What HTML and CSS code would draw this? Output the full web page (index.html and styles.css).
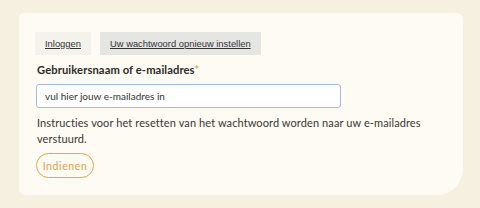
FILE: index.html
```html
<!DOCTYPE html>
<html lang="nl">
<head>
<meta charset="utf-8">
<link rel="stylesheet" href="styles.css">
</head>
<body>
<div class="card">
  <div class="tabs">
    <a class="tab tab-light" href="#">Inloggen</a>
    <a class="tab tab-active" href="#">Uw wachtwoord opnieuw instellen</a>
  </div>
  <form class="form">
    <label class="label">Gebruikersnaam of e-mailadres<span class="req">*</span></label>
    <input class="input" type="text" placeholder="vul hier jouw e-mailadres in">
    <p class="help">Instructies voor het resetten van het wachtwoord worden naar uw e-mailadres verstuurd.</p>
    <button class="btn" type="button">Indienen</button>
  </form>
</div>
</body>
</html>
```
FILE: styles.css
```css
html, body {
  margin: 0;
  padding: 0;
  background: #f6f0e1;
}
body {
  padding: 13px 17px 13px 19px;
  font-family: Lato, "Noto Sans", sans-serif;
  color: #333;
}
.card {
  width: 444px;
  height: 182px;
  box-sizing: border-box;
  background: #fdfbf4;
  border-radius: 5px 6px 26px 6px;
  padding: 19px 18px 0 18px;
}
.tabs {
  display: flex;
  gap: 9px;
  margin-left: -2px;
}
.tab {
  font-family: "Liberation Sans", Arial, sans-serif;
  font-size: 9.4px;
  color: #333;
  text-decoration: underline;
  height: 23px;
  line-height: 23px;
  padding: 0 10px;
}
.tab-light {
  background: #f3f2ec;
}
.tab-active {
  background: #e5e5e4;
}
.form {
  display: flex;
  flex-direction: column;
  align-items: flex-start;
}
.label {
  margin-top: 8px;
  font-weight: 700;
  font-size: 11.2px;
  line-height: 14px;
  letter-spacing: 0.1px;
  color: #2e2a26;
}
.req {
  color: #eaa34c;
}
.input {
  margin-top: 7px;
  margin-left: -1px;
  width: 305px;
  height: 24px;
  box-sizing: border-box;
  border: 1px solid #a6b8e6;
  border-radius: 3px;
  background: #fff;
  padding: 0 8px;
  font-family: Lato, "Noto Sans", sans-serif;
  font-size: 10px;
  color: #333;
  outline: none;
}
.input::placeholder {
  color: #333;
  opacity: 1;
}
.help {
  margin: 7px 0 0 0;
  font-size: 11px;
  line-height: 16px;
  color: #3a3632;
  letter-spacing: 0.1px;
}
.btn {
  margin-top: 6px;
  margin-left: -1px;
  height: 25px;
  width: 58px;
  border: 1px solid #e8a548;
  border-radius: 13px;
  background: transparent;
  color: #e5a045;
  font-family: Lato, "Noto Sans", sans-serif;
  font-size: 10.5px;
  font-weight: 400;
  letter-spacing: 0.6px;
  padding: 0;
}
```
